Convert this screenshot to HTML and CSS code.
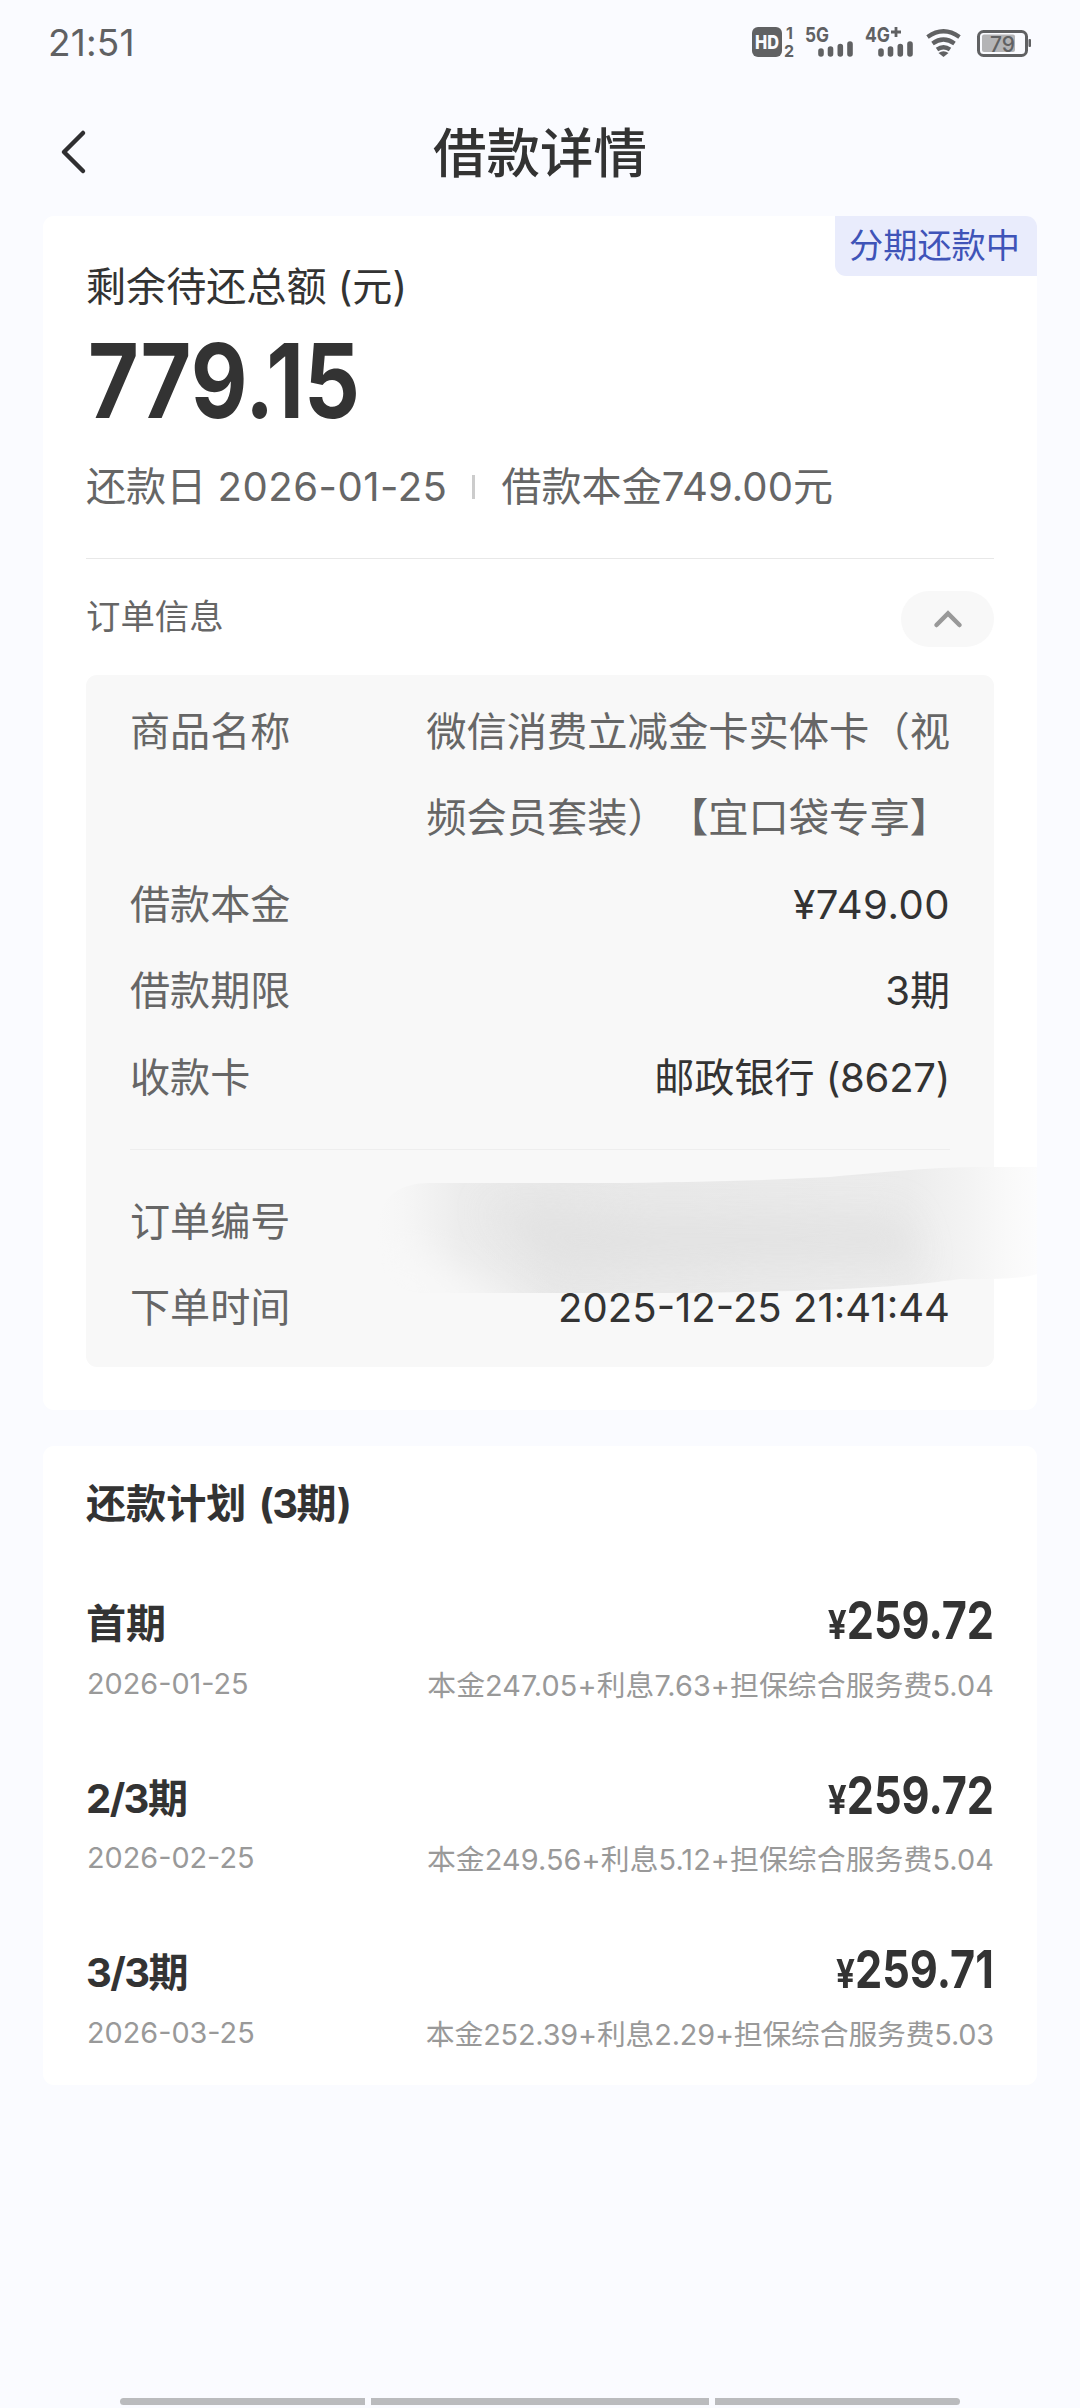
FILE: index.html
```html
<!DOCTYPE html>
<html lang="zh-CN">
<head>
<meta charset="utf-8">
<title>借款详情</title>
<link rel="stylesheet" href="styles.css">
</head>
<body>
<div class="screen">
  <header class="status">
    <span class="clock">21:51</span>
    <svg class="status-icons" width="290" height="40" viewBox="752 22 290 40">
      <rect x="753" y="27" width="30" height="30" rx="6" fill="#606163"/>
      <text class="st hd" x="756" y="48.500" textLength="24" lengthAdjust="spacingAndGlyphs">HD</text>
      <text class="st sim" x="787" y="39">1</text>
      <text class="st sim" x="785" y="56.500">2</text>
      <text class="st net" x="806" y="42" textLength="24" lengthAdjust="spacingAndGlyphs">5G</text>
      <text class="st net" x="866" y="42" textLength="25" lengthAdjust="spacingAndGlyphs">4G</text>
      <path d="M892 32h10M897 27v10" stroke="#606163" stroke-width="2.800"/>
      <g stroke="#606163" stroke-width="5.600" stroke-linecap="round">
        <path d="M822 51v3M831.500 49v5M841.300 46.500v7.500M851 44v10"/>
        <path d="M882 51v3M891.500 49v5M901.300 46.500v7.500M911 44v10"/>
      </g>
      <g fill="none" stroke="#606163" stroke-width="4.200">
        <path d="M928.500 37Q944.500 25.500 960.500 37"/>
        <path d="M933.500 43.500Q944.500 35.500 955.500 43.500"/>
        <path d="M938 49.500Q944.500 45 951 49.500"/>
      </g>
      <path d="M939.500 53Q944.500 49.500 949.500 53L944.500 57z" fill="#606163"/>
      <rect x="979.500" y="31.500" width="48" height="24" rx="5" fill="none" stroke="#606163" stroke-width="3"/>
      <rect x="983" y="34.500" width="33" height="17.500" rx="2" fill="#b4b4b6"/>
      <rect x="1029.500" y="39" width="2.500" height="8" rx="1" fill="#606163"/>
      <text class="st bat" x="991" y="51.500" textLength="25" lengthAdjust="spacingAndGlyphs">79</text>
    </svg>
  </header>

  <nav class="titlebar">
    <svg class="back" width="32" height="50" viewBox="0 0 32 50"><path d="M26 6L7 25L26 44" fill="none" stroke="#2f2f31" stroke-width="4.500" stroke-linecap="round" stroke-linejoin="round"/></svg>
    <h1>借款详情</h1>
  </nav>

  <main>
    <section class="card summary">
      <span class="badge">分期还款中</span>
      <p class="label">剩余待还总额 (元)</p>
      <p class="total"><span>779.15</span></p>
      <p class="meta"><span>还款日 <span class="num">2026-01-25</span></span><i class="bar"></i><span>借款本金749.00元</span></p>
      <div class="order-head">
        <span>订单信息</span>
        <span class="toggle"><svg width="30" height="20" viewBox="0 0 30 20"><path d="M3.500 16L15 4.500L26.500 16" fill="none" stroke="#999" stroke-width="4.500" stroke-linecap="round"/></svg></span>
      </div>
      <div class="order">
        <dl>
          <div class="row"><dt>商品名称</dt><dd class="name">微信消费立减金卡实体卡（视<br>频会员套装）【宜口袋专享】</dd></div>
          <div class="row"><dt>借款本金</dt><dd><span class="num">¥749.00</span></dd></div>
          <div class="row"><dt>借款期限</dt><dd>3期</dd></div>
          <div class="row"><dt>收款卡</dt><dd>邮政银行 <span class="card-no">(8627)</span></dd></div>
        </dl>
        <hr>
        <dl>
          <div class="row"><dt>订单编号</dt><dd></dd></div>
          <div class="row"><dt>下单时间</dt><dd>2025-12-25 21:41:44</dd></div>
        </dl>
        <svg class="smear" width="670" height="140" viewBox="370 1160 670 140">
          <defs>
            <linearGradient id="sx" x1="375" x2="1040" y1="0" y2="0" gradientUnits="userSpaceOnUse">
              <stop offset="0" stop-color="#f7f7f7" stop-opacity="0"/>
              <stop offset=".06" stop-color="#f4f4f4"/>
              <stop offset=".13" stop-color="#ececec"/>
              <stop offset=".26" stop-color="#e8e8e8"/>
              <stop offset=".6" stop-color="#eaeaea"/>
              <stop offset=".8" stop-color="#ececec"/>
              <stop offset=".89" stop-color="#f3f3f3"/>
              <stop offset=".95" stop-color="#f9f9f9"/>
              <stop offset="1" stop-color="#fcfcfd"/>
            </linearGradient>
            <clipPath id="sc"><path d="M430 1183H600Q740 1182 830 1177Q940 1166 980 1167H1037V1274Q1020 1280 960 1279Q860 1294 600 1293H430Q376 1293 376 1238Q376 1183 430 1183z"/></clipPath>
            <filter id="sb" x="-30%" y="-50%" width="160%" height="200%"><feGaussianBlur stdDeviation="18"/></filter>
          </defs>
          <g clip-path="url(#sc)">
            <rect x="370" y="1160" width="670" height="140" fill="url(#sx)"/>
            <path d="M485 1205L660 1218L900 1214L920 1265L780 1262L560 1270L520 1240z" fill="#dedede" opacity=".6" filter="url(#sb)"/>
            <path d="M350 1235L440 1262L550 1320H350z" fill="#f8f8f8" filter="url(#sb)"/>
          </g>
        </svg>
      </div>
    </section>

    <section class="card plan">
      <h2>还款计划 <span class="numb">(3</span>期<span class="numb">)</span></h2>
      <article class="term">
        <div class="line"><b>首期</b><strong class="amt"><small>¥</small>259.72</strong></div>
        <div class="sub"><span>2026-01-25</span><span class="fee">本金247.05+利息7.63+担保综合服务费5.04</span></div>
      </article>
      <article class="term">
        <div class="line"><b><span class="numb">2/3</span>期</b><strong class="amt"><small>¥</small>259.72</strong></div>
        <div class="sub"><span>2026-02-25</span><span class="fee">本金249.56+利息5.12+担保综合服务费5.04</span></div>
      </article>
      <article class="term">
        <div class="line"><b><span class="numb">3/3</span>期</b><strong class="amt"><small>¥</small>259.71</strong></div>
        <div class="sub"><span>2026-03-25</span><span class="fee tight">本金252.39+利息2.29+担保综合服务费5.03</span></div>
      </article>
    </section>
  </main>

  <footer class="gesture"><i></i><i class="mid"></i><i></i></footer>
</div>
</body>
</html>
```
FILE: styles.css
```css
* { box-sizing: border-box; margin: 0; padding: 0; }
body { background: #fafbff; }
.screen {
  width: 1080px;
  height: 2408px;
  display: flex;
  flex-direction: column;
  overflow: hidden;
  font-family: Inter, "Noto Sans CJK SC", sans-serif;
  font-size: 40.1px;
  color: #333;
  white-space: nowrap;
  text-spacing-trim: space-all;
}

/* status bar */
.status {
  height: 84px;
  padding: 0 39px 0 48px;
  display: flex;
  align-items: center;
  justify-content: space-between;
}
.clock { font-size: 37px; color: #606163; letter-spacing: .2px; }
.st { font-family: Inter, sans-serif; fill: #606163; font-weight: 700; }
.hd { fill: #fafbff; font-size: 19px; font-weight: 800; }
.sim { font-size: 16px; }
.net { font-size: 20.500px; }
.bat { font-size: 21px; font-weight: 500; }

/* title bar */
.titlebar {
  height: 132px;
  padding: 3px 57px 0;
  display: grid;
  grid-template-columns: 60px 1fr 60px;
  align-items: center;
}
h1 { font-size: 53.5px; font-weight: 500; line-height: 80px; text-align: center; padding-top: 4px; }

/* cards */
main { flex: 1; padding: 0 43px; display: flex; flex-direction: column; gap: 36px; }
.card { position: relative; background: #fff; border-radius: 11px; padding: 0 43px; }
.summary { height: 1194px; padding-top: 41px; }
.badge {
  position: absolute;
  top: 0;
  right: 0;
  height: 60px;
  padding: 0 17px 0 14px;
  background: #e9ecfc;
  color: #3f54b8;
  font-size: 34.2px;
  line-height: 59px;
  border-radius: 0 11px 0 11px;
}
.label { line-height: 60px; }
.total { height: 120px; padding-left: 2px; font-size: 103px; line-height: 128px; font-weight: 700; }
.total span { display: inline-block; transform: scaleX(.85); transform-origin: 0 50%; }
.meta { height: 100px; color: #666; line-height: 100px; display: flex; align-items: center; }
.num { letter-spacing: .5px; }
.card-no { letter-spacing: -.3px; }
.bar { width: 3px; height: 24px; background: #ccc; margin: 0 26px 0 25px; }
.order-head {
  height: 117px;
  margin-top: 21px;
  border-top: 1px solid #e8e8e8;
  padding-bottom: 6px;
  display: flex;
  align-items: center;
  justify-content: space-between;
  color: #666;
  font-size: 34.4px;
}
.toggle {
  width: 93px;
  height: 56px;
  margin-top: 9px;
  border-radius: 28px;
  background: #f8f8f8;
  display: flex;
  align-items: center;
  justify-content: center;
}
.order {
  position: relative;
  height: 692px;
  padding: 14px 44px;
  background: #f8f8f8;
  border-radius: 11px;
}
.row { display: flex; justify-content: space-between; line-height: 86.4px; }
dt, .name { color: #666; }
dd { text-align: right; }
dd.name { text-align: left; font-size: 40.3px; }
hr { border: 0; height: 1px; background: #eee; margin: 28px 0 29px; }
.smear { position: absolute; left: 284px; top: 485px; }

/* repayment plan */
.plan { height: 639px; padding-top: 28px; }
h2, b { font-size: 40.1px; font-weight: 700; }
h2 { line-height: 60px; margin-bottom: 59px; word-spacing: 3px; }
b { padding-bottom: 5px; }
.numb { letter-spacing: -1.6px; }
.term { height: 174.7px; }
.line { height: 60px; display: flex; justify-content: space-between; align-items: center; }
.amt { font-size: 52px; font-weight: 700; line-height: 60px; transform: scaleX(.831); transform-origin: 100% 50%; }
.amt small { font-size: 40px; }
.sub { height: 60px; padding-left: 1px; display: flex; justify-content: space-between; align-items: center; color: #999; font-size: 28.8px; }
.fee { letter-spacing: .12px; }
.fee.tight { letter-spacing: -.15px; }

/* gesture hint bars */
.gesture { height: 10px; padding: 0 120px; display: flex; gap: 6px; }
.gesture i { width: 245px; height: 7px; background: #babbbd; border-radius: 4px 0 0 4px; }
.gesture .mid { width: 338px; border-radius: 0; }
.gesture i:last-child { border-radius: 0 4px 4px 0; }
```
